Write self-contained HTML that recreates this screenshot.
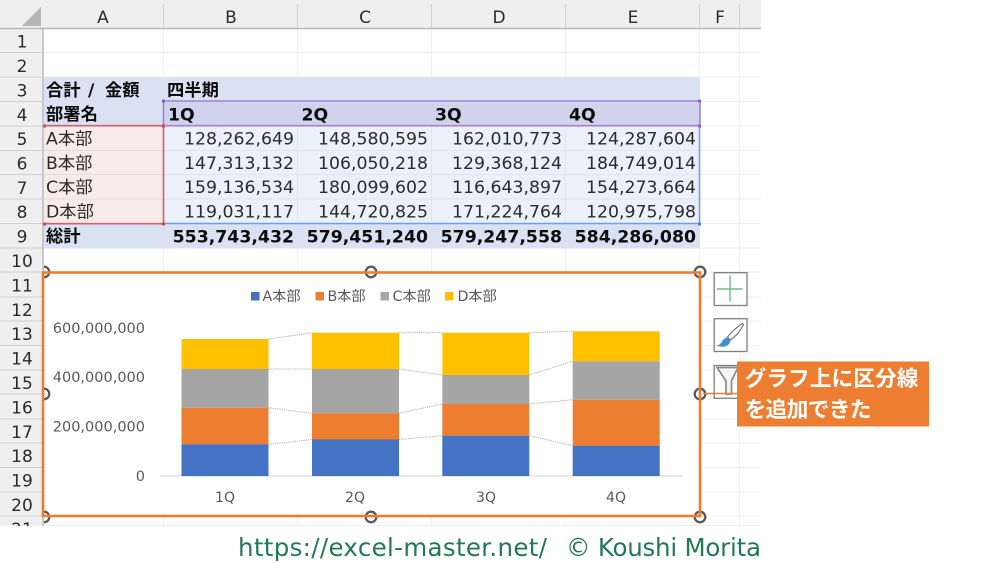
<!DOCTYPE html>
<html lang="ja"><head><meta charset="utf-8"><title>Excel</title>
<style>
html,body{margin:0;padding:0;background:#fff}
body{width:1000px;height:563px;overflow:hidden}
svg{display:block;filter:blur(0.3px)}
text{font-family:"DejaVu Sans","Noto Sans CJK JP",sans-serif}
.h{font-size:17px;fill:#2b2b2b;text-anchor:middle}
.t{font-size:17.3px;fill:#2b2b2b}
.b{font-size:17.3px;fill:#0c0c0c;font-weight:bold}
.n{font-size:17.3px;fill:#2b2b2b;text-anchor:end}
.nb{font-size:17.3px;fill:#0c0c0c;font-weight:bold;text-anchor:end}
.l{font-size:14.2px;fill:#595959}
.a{font-size:14.5px;fill:#595959;text-anchor:end}
.c{font-size:14px;fill:#595959;text-anchor:middle}
.co{font-size:21.7px;fill:#fff;font-weight:bold;font-family:"Noto Sans CJK JP",sans-serif}
</style></head><body>
<svg width="1000" height="563" viewBox="0 0 1000 563" xmlns="http://www.w3.org/2000/svg">
<defs>
<clipPath id="sheet"><rect x="0" y="0" width="761" height="526"/></clipPath>
<clipPath id="cr"><rect x="44" y="250" width="700" height="290"/></clipPath>
</defs>
<rect width="1000" height="563" fill="#fff"/>

<g clip-path="url(#sheet)">
<!-- gridlines -->
<g stroke="#efefef" stroke-width="1">
<path d="M163.5 28V526M297.5 28V526M431.5 28V526M565.5 28V526M699.5 28V526M739.5 28V526"/>
<path d="M43 52.5H761M43 77H761M43 101.5H761M43 126H761M43 150.5H761M43 174.5H761M43 199H761M43 223.5H761M43 248H761M43 272H761M43 297H761M43 321H761M43 345.5H761M43 370H761M43 394H761M43 419H761M43 443H761M43 467.5H761M43 492H761M43 516H761M43 525.5H761"/>
</g>
<!-- headers -->
<rect x="0" y="0" width="761" height="28" fill="#efefef"/>
<rect x="0" y="28" width="43" height="498" fill="#efefef"/>
<path d="M41 7V26H22Z" fill="#b5b5b5"/>
<path d="M0 28.5H761" stroke="#b8b8b8" stroke-width="1.5"/>
<path d="M43 28V526" stroke="#b8b8b8" stroke-width="1.5"/>
<g stroke="#cfcfcf" stroke-width="1">
<path d="M163.5 4V28M297.5 4V28M431.5 4V28M565.5 4V28M699.5 4V28M739.5 4V28"/>
<path d="M0 52.5H43M0 77H43M0 101.5H43M0 126H43M0 150.5H43M0 174.5H43M0 199H43M0 223.5H43M0 248H43M0 272H43M0 297H43M0 321H43M0 345.5H43M0 370H43M0 394H43M0 419H43M0 443H43M0 467.5H43M0 492H43M0 516H43"/>
</g>
<text class="h" x="103" y="23">A</text><text class="h" x="231" y="23">B</text><text class="h" x="365" y="23">C</text><text class="h" x="499" y="23">D</text><text class="h" x="633" y="23">E</text><text class="h" x="720" y="23">F</text>
<text class="h" x="22" y="47.5">1</text><text class="h" x="22" y="72">2</text><text class="h" x="22" y="96.5">3</text><text class="h" x="22" y="121">4</text><text class="h" x="22" y="145">5</text><text class="h" x="22" y="169.5">6</text><text class="h" x="22" y="194">7</text><text class="h" x="22" y="218">8</text><text class="h" x="22" y="242.5">9</text><text class="h" x="22" y="267">10</text><text class="h" x="22" y="291.5">11</text><text class="h" x="22" y="316">12</text><text class="h" x="22" y="340">13</text><text class="h" x="22" y="364.5">14</text><text class="h" x="22" y="389">15</text><text class="h" x="22" y="413.5">16</text><text class="h" x="22" y="438">17</text><text class="h" x="22" y="462">18</text><text class="h" x="22" y="486.5">19</text><text class="h" x="22" y="511">20</text><text class="h" x="22" y="535">21</text>

<!-- pivot fills -->
<rect x="44" y="77" width="656" height="49" fill="#d9e1f2"/>
<rect x="164" y="101.5" width="536" height="24.5" fill="#cfd3ec"/>
<rect x="44" y="126" width="120" height="98" fill="#f9eaea"/>
<rect x="164" y="126" width="536" height="98" fill="#ebf0fa"/>
<rect x="44" y="224" width="656" height="24.5" fill="#d9e1f2"/>
<g stroke="#e3dede" stroke-width="1"><path d="M44 150.5H163M44 174.5H163M44 199H163"/></g>
<g stroke="#dfe5f2" stroke-width="1"><path d="M164 150.5H699M164 174.5H699M164 199H699M297.5 126V224M431.5 126V224M565.5 126V224"/></g>

<!-- range borders -->
<path d="M699.5 126V223.5H164" fill="none" stroke="#6f9fe3" stroke-width="1.6"/>
<path d="M44 125.7H163.5V223.7H44" fill="none" stroke="#d65f6c" stroke-width="1.6"/>
<path d="M163.5 101H700V125.7H163.5Z" fill="none" stroke="#a67fd2" stroke-width="1.6"/>
<g fill="#8f5fc8"><rect x="162" y="99.5" width="3" height="3"/><rect x="698" y="99.5" width="3" height="3"/><rect x="698" y="124.5" width="3" height="3"/></g>
<g fill="#d0485a"><rect x="43" y="124.5" width="3" height="3"/><rect x="162" y="124.5" width="3" height="3"/><rect x="162" y="222.5" width="3" height="3"/><rect x="43" y="222.5" width="3" height="3"/></g>
<rect x="698" y="222.5" width="3" height="3" fill="#4a86d8"/>

<!-- table text -->
<text class="b" x="46" y="96">合計</text><text class="b" x="88" y="96">/</text><text class="b" x="105" y="96">金額</text>
<text class="b" x="167" y="96">四半期</text>
<text class="b" x="46" y="120">部署名</text>
<text class="b" x="168" y="120.5">1Q</text><text class="b" x="301.5" y="120.5">2Q</text><text class="b" x="435" y="120.5">3Q</text><text class="b" x="569" y="120.5">4Q</text>
<text class="t" x="46" y="144.5">A本部</text><text class="t" x="46" y="169">B本部</text><text class="t" x="46" y="193">C本部</text><text class="t" x="46" y="217.5">D本部</text>
<text class="b" x="46" y="242">総計</text>
<text class="n" x="294" y="144.5">128,262,649</text><text class="n" x="428" y="144.5">148,580,595</text><text class="n" x="562" y="144.5">162,010,773</text><text class="n" x="696" y="144.5">124,287,604</text>
<text class="n" x="294" y="169">147,313,132</text><text class="n" x="428" y="169">106,050,218</text><text class="n" x="562" y="169">129,368,124</text><text class="n" x="696" y="169">184,749,014</text>
<text class="n" x="294" y="193">159,136,534</text><text class="n" x="428" y="193">180,099,602</text><text class="n" x="562" y="193">116,643,897</text><text class="n" x="696" y="193">154,273,664</text>
<text class="n" x="294" y="217.5">119,031,117</text><text class="n" x="428" y="217.5">144,720,825</text><text class="n" x="562" y="217.5">171,224,764</text><text class="n" x="696" y="217.5">120,975,798</text>
<text class="nb" x="294" y="242.5">553,743,432</text><text class="nb" x="428" y="242.5">579,451,240</text><text class="nb" x="562" y="242.5">579,247,558</text><text class="nb" x="696" y="242.5">584,286,080</text>
</g>

<!-- chart -->
<rect x="43" y="272" width="657" height="244" fill="#fff"/>
<!-- legend -->
<rect x="251" y="292" width="8.5" height="8.5" fill="#4472c4"/><text class="l" x="262.5" y="301">A本部</text>
<rect x="315.5" y="292" width="8.5" height="8.5" fill="#ed7d31"/><text class="l" x="327.5" y="301">B本部</text>
<rect x="380.5" y="292" width="8.5" height="8.5" fill="#a5a5a5"/><text class="l" x="392.5" y="301">C本部</text>
<rect x="445" y="292" width="8.5" height="8.5" fill="#ffc000"/><text class="l" x="457.5" y="301">D本部</text>
<!-- axis -->
<text class="a" x="145" y="333">600,000,000</text><text class="a" x="145" y="382">400,000,000</text><text class="a" x="145" y="431.5">200,000,000</text><text class="a" x="145" y="481">0</text>
<path d="M160 476H682" stroke="#d9d9d9" stroke-width="1.3"/>
<!-- bars -->
<g>
<rect x="181.5" y="339" width="87" height="30" fill="#ffc000"/><rect x="181.5" y="369" width="87" height="38.7" fill="#a5a5a5"/><rect x="181.5" y="407.7" width="87" height="36.6" fill="#ed7d31"/><rect x="181.5" y="444.3" width="87" height="31.7" fill="#4472c4"/>
<rect x="312" y="332.7" width="87" height="36.3" fill="#ffc000"/><rect x="312" y="369" width="87" height="44.3" fill="#a5a5a5"/><rect x="312" y="413.3" width="87" height="26.2" fill="#ed7d31"/><rect x="312" y="439.5" width="87" height="36.5" fill="#4472c4"/>
<rect x="442.3" y="332.7" width="87" height="42.3" fill="#ffc000"/><rect x="442.3" y="375" width="87" height="29" fill="#a5a5a5"/><rect x="442.3" y="404" width="87" height="31.7" fill="#ed7d31"/><rect x="442.3" y="435.7" width="87" height="40.3" fill="#4472c4"/>
<rect x="572.7" y="331.3" width="87" height="30" fill="#ffc000"/><rect x="572.7" y="361.3" width="87" height="38.4" fill="#a5a5a5"/><rect x="572.7" y="399.7" width="87" height="46" fill="#ed7d31"/><rect x="572.7" y="445.7" width="87" height="30.3" fill="#4472c4"/>
</g>
<!-- series lines -->
<g fill="none" stroke="#b5b5b5" stroke-width="1.1" stroke-dasharray="1.2 1">
<path d="M268.5 339L312 332.7M268.5 369H312M268.5 407.7L312 413.3M268.5 444.3L312 439.5"/>
<path d="M399 332.7H442.3M399 369L442.3 375M399 413.3L442.3 404M399 439.5L442.3 435.7"/>
<path d="M529.3 332.7L572.7 331.3M529.3 375L572.7 361.3M529.3 404L572.7 399.7M529.3 435.7L572.7 445.7"/>
</g>
<text class="c" x="225" y="502">1Q</text><text class="c" x="355" y="502">2Q</text><text class="c" x="486" y="502">3Q</text><text class="c" x="616" y="502">4Q</text>

<!-- chart border & handles -->
<g fill="none" stroke="#595959" stroke-width="2.3" clip-path="url(#cr)">
<circle cx="44" cy="272" r="5.3"/><circle cx="371" cy="272" r="5.3"/><circle cx="700" cy="272" r="5.3"/>
<circle cx="44" cy="394" r="5.3"/><circle cx="700" cy="394" r="5.3"/>
<circle cx="44" cy="517" r="5.3"/><circle cx="371" cy="517" r="5.3"/><circle cx="700" cy="517" r="5.3"/>
</g>
<rect x="43" y="272.5" width="657" height="243.5" fill="none" stroke="#ed7d31" stroke-width="2.6"/>

<!-- side buttons -->
<g fill="#fff" stroke="#7f7f7f" stroke-width="1.3">
<rect x="714.2" y="272.7" width="32.8" height="32.8"/>
<rect x="714.2" y="318.7" width="32.8" height="32.8"/>
<rect x="714.2" y="365.5" width="32.8" height="32.8"/>
</g>
<path d="M717 289H742.5M730 275.5V301.5" stroke="#69bd83" stroke-width="1.4" fill="none"/>
<path d="M742.5 323.5L743.5 324.5C741 330 736 336 730.5 340L727.5 337C731.5 332 737 327 742.5 323.5Z" fill="#fff" stroke="#767676" stroke-width="1.2"/>
<path d="M727 337.5L730.5 340.5C730 344 727 347 722 346.8C720 346.7 718 346.3 716.5 345.5C719.5 345 721 343.5 722 341.5C723 339.5 725 338 727 337.5Z" fill="#3f8fd6"/>
<path d="M717 367.5H738L731.5 381V394H726V381Z" fill="#f6f6f6" stroke="#8a8a8a" stroke-width="1.7"/>
<path d="M703 393.5H738" stroke="#ed7d31" stroke-width="1.6"/>

<!-- callout -->
<rect x="737" y="361.5" width="192" height="65" fill="#ed7d31"/>
<text class="co" x="744.5" y="386" textLength="174" lengthAdjust="spacing">グラフ上に区分線</text>
<text class="co" x="744.5" y="417" textLength="127" lengthAdjust="spacing">を追加できた</text>

<!-- footer -->
<text x="238" y="556" font-size="24.5" fill="#237a52" textLength="309" lengthAdjust="spacing">https://excel-master.net/</text>
<text x="566" y="556" font-size="24.5" fill="#237a52" textLength="195" lengthAdjust="spacing">© Koushi Morita</text>
</svg>
</body></html>
